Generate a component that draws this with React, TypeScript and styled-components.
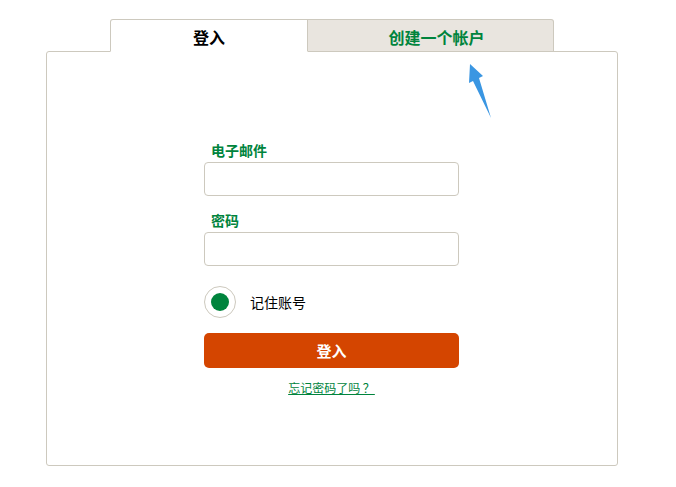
import * as React from 'react'
import styled, { createGlobalStyle } from 'styled-components'

const GlobalStyle = createGlobalStyle`
  html, body {
    margin: 0;
    padding: 0;
    background: #fff;
  }
  body {
    font-family: "Noto Sans CJK SC", "Liberation Sans", sans-serif;
  }
`

const green = '#00843d'
const line = '#cdc9be'

const Page = styled.div`
  position: relative;
  width: 572px;
  padding: 19px 0 0 46px;
`

const TabBar = styled.div`
  display: flex;
  padding-left: 64px;
  margin-bottom: -1px;
  position: relative;
  z-index: 1;
`

const Tab = styled.div<{ $active?: boolean }>`
  box-sizing: border-box;
  height: 33px;
  width: ${p => (p.$active ? '198px' : '246px')};
  display: flex;
  align-items: center;
  justify-content: center;
  padding-top: 3px;
  padding-left: ${p => (p.$active ? '0' : '12px')};
  font-size: 16px;
  font-weight: 700;
  color: ${p => (p.$active ? '#000' : green)};
  background: ${p => (p.$active ? '#fff' : '#e9e5df')};
  border: 1px solid ${line};
  border-bottom-color: ${p => (p.$active ? '#fff' : line)};
  border-left: ${p => (p.$active ? `1px solid ${line}` : 'none')};
  border-radius: ${p => (p.$active ? '3px 0 0 0' : '0 3px 0 0')};
  cursor: pointer;
`

const Panel = styled.div`
  box-sizing: border-box;
  width: 572px;
  height: 415px;
  border: 1px solid ${line};
  border-radius: 3px;
  padding: 89px 0 0 157px;
`

const Form = styled.form`
  width: 255px;
  display: flex;
  flex-direction: column;
`

const Field = styled.div`
  display: flex;
  flex-direction: column;
  gap: 3px;
  & + & {
    margin-top: 15px;
  }
`

const Label = styled.label`
  font-size: 14px;
  line-height: 18px;
  font-weight: 700;
  color: ${green};
  padding-left: 7px;
`

const Input = styled.input`
  box-sizing: border-box;
  height: 34px;
  width: 100%;
  border: 1px solid ${line};
  border-radius: 4px;
  padding: 0 8px;
  font-size: 14px;
  outline: none;
`

const RememberRow = styled.label`
  display: flex;
  align-items: center;
  gap: 14px;
  margin-top: 20px;
  font-size: 14px;
  color: #000;
`

const Radio = styled.span`
  box-sizing: border-box;
  width: 32px;
  height: 32px;
  border-radius: 50%;
  border: 1px solid ${line};
  display: flex;
  align-items: center;
  justify-content: center;
  &::after {
    content: '';
    width: 18px;
    height: 18px;
    border-radius: 50%;
    background: ${green};
  }
`

const SubmitButton = styled.button`
  margin-top: 15px;
  height: 35px;
  border: none;
  border-radius: 5px;
  background: #d44500;
  color: #fff;
  font-family: inherit;
  font-size: 15px;
  font-weight: 700;
  cursor: pointer;
`

const ForgotLink = styled.a`
  align-self: center;
  margin-top: 13px;
  font-size: 12px;
  line-height: 14px;
  color: ${green};
  text-decoration: underline;
  cursor: pointer;
`

const Arrow = styled.svg`
  position: absolute;
  left: 460px;
  top: 60px;
  z-index: 2;
`

export default function App() {
  return (
    <>
      <GlobalStyle />
      <Page>
        <TabBar>
          <Tab $active>登入</Tab>
          <Tab>创建一个帐户</Tab>
        </TabBar>
        <Panel>
          <Form onSubmit={e => e.preventDefault()}>
            <Field>
              <Label>电子邮件</Label>
              <Input type="email" />
            </Field>
            <Field>
              <Label>密码</Label>
              <Input type="password" />
            </Field>
            <RememberRow>
              <Radio />
              记住账号
            </RememberRow>
            <SubmitButton type="submit">登入</SubmitButton>
            <ForgotLink>忘记密码了吗 ？</ForgotLink>
          </Form>
        </Panel>
        <Arrow width="40" height="62" viewBox="460 60 40 62">
          <polygon
            points="470,64 483,76 479,78 491,118 473,81 469,83"
            fill="#3a96e2"
          />
        </Arrow>
      </Page>
    </>
  )
}
